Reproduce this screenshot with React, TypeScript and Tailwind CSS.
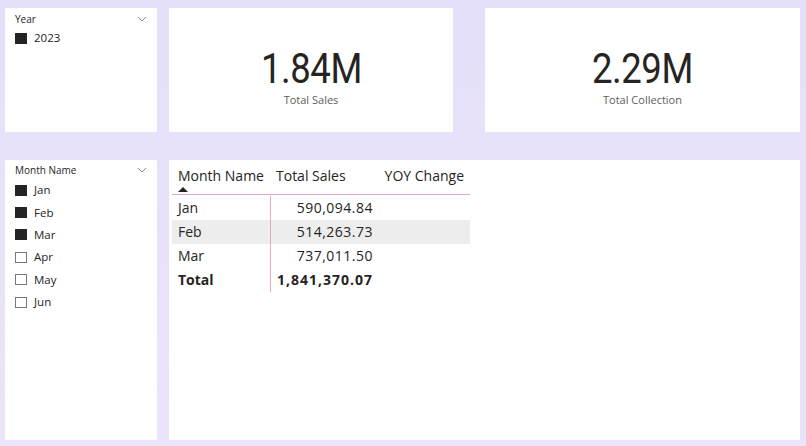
import React from "react";

const UI = { fontFamily: '"Open Sans", "Noto Sans", sans-serif' };
const BIG = { fontFamily: 'Roboto, "Liberation Sans", sans-serif' };

function Chevron() {
  return (
    <svg width="10" height="6" viewBox="0 0 10 6" className="block">
      <path d="M1 1 L5 5 L9 1" fill="none" stroke="#8a8886" strokeWidth="1" />
    </svg>
  );
}

function Check({ on, label }: { on: boolean; label: string }) {
  return (
    <div className="flex items-center h-[22.4px]">
      <div
        className={
          on
            ? "w-[12px] h-[11px] bg-[#252423] border border-[#252423]"
            : "w-[12px] h-[11px] bg-white border border-[#7a7876]"
        }
      />
      <span className="ml-[7px] text-[11.5px] text-[#252423] leading-[16px]">{label}</span>
    </div>
  );
}

function Card({ value, label }: { value: string; label: string }) {
  return (
    <div className="bg-white h-full flex flex-col items-center pt-[39px]">
      <div
        style={BIG}
        className="text-[43px] leading-[43px] text-[#252423] tracking-[-0.5px] scale-x-[0.85]"
      >
        {value}
      </div>
      <div className="mt-[2px] text-[11px] leading-[16px] text-[#605e5c]">{label}</div>
    </div>
  );
}

export default function App() {
  const rows = [
    ["Jan", "590,094.84"],
    ["Feb", "514,263.73"],
    ["Mar", "737,011.50"],
  ];
  return (
    <div
      style={UI}
      className="w-[806px] h-[446px] overflow-hidden bg-gradient-to-b from-[#e5e0fa] to-[#ebe3f8] pt-[8px] pl-[5px] flex flex-col gap-[28px]"
    >
      {/* top row */}
      <div className="flex h-[124px]">
        <div className="w-[152px] h-full bg-white px-[10px] pt-[3px]">
          <div className="flex items-center justify-between h-[16px]">
            <span className="text-[10px] text-[#252423] leading-[16px]">Year</span>
            <Chevron />
          </div>
          <div className="mt-0">
            <Check on label="2023" />
          </div>
        </div>
        <div className="ml-[12px] w-[284px] h-full">
          <Card value="1.84M" label="Total Sales" />
        </div>
        <div className="ml-[32px] w-[315px] h-full">
          <Card value="2.29M" label="Total Collection" />
        </div>
      </div>

      {/* bottom row */}
      <div className="flex h-[280px]">
        <div className="w-[152px] h-full bg-white px-[10px] pt-[2px]">
          <div className="flex items-center justify-between h-[16px]">
            <span className="text-[10px] text-[#252423] leading-[16px]">Month Name</span>
            <Chevron />
          </div>
          <div className="mt-[1px] flex flex-col">
            <Check on label="Jan" />
            <Check on label="Feb" />
            <Check on label="Mar" />
            <Check on={false} label="Apr" />
            <Check on={false} label="May" />
            <Check on={false} label="Jun" />
          </div>
        </div>
        <div className="ml-[12px] w-[631px] h-full bg-white pl-[3px] pt-[6px]">
          <div className="w-[298px] text-[14px] text-[#252423]">
            {/* header */}
            <div className="grid grid-cols-[98px_106px_94px] border-b border-[#e3a9cc] h-[29px]">
              <div className="pl-[6px]">
                <div className="leading-[20px] whitespace-nowrap">Month Name</div>
                <svg width="10" height="5" viewBox="0 0 10 5" className="block mt-[1px]">
                  <path d="M0 5 L5 0 L10 5 Z" fill="#252423" />
                </svg>
              </div>
              <div className="pl-[6px] leading-[20px] whitespace-nowrap">Total Sales</div>
              <div className="pr-[6px] text-right leading-[20px] whitespace-nowrap">YOY Change</div>
            </div>
            <div className="pt-[1px]">
              {rows.map(([m, v], i) => (
                <div
                  key={m}
                  className={
                    i === 1
                      ? "grid grid-cols-[98px_106px_94px] h-[24px] bg-[#eeeded]"
                      : "grid grid-cols-[98px_106px_94px] h-[24px]"
                  }
                >
                  <div className="pl-[6px] leading-[24px]">{m}</div>
                  <div className="border-l border-[#e3a9cc] pr-[3px] text-right leading-[24px] tracking-[0.5px]">
                    {v}
                  </div>
                  <div />
                </div>
              ))}
              <div className="grid grid-cols-[98px_106px_94px] h-[24px] font-bold">
                <div className="pl-[6px] leading-[24px]">Total</div>
                <div className="border-l border-[#e3a9cc] pr-[3px] text-right leading-[24px] tracking-[1px]">
                  1,841,370.07
                </div>
                <div />
              </div>
            </div>
          </div>
        </div>
      </div>
    </div>
  );
}
